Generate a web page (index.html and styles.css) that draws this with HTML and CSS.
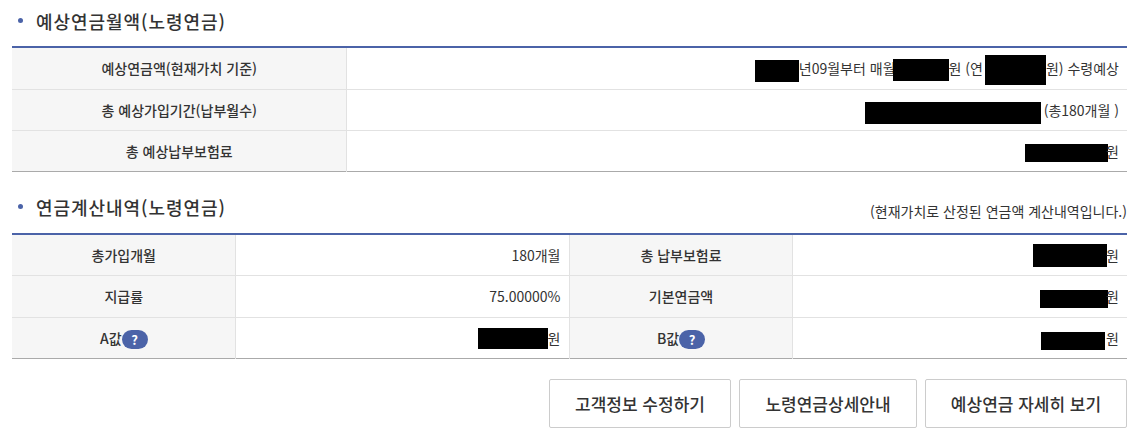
FILE: index.html
```html
<!DOCTYPE html>
<html lang="ko">

<head>
    <meta charset="UTF-8">
    <title>예상연금월액</title>
    <link rel="stylesheet" href="styles.css">
</head>

<body>

    <!-- 예상연금월액 -->
    <div class="section-head">
        <h2 class="section-title">예상연금월액(노령연금)</h2>
    </div>
    <table class="info-table first-table">
        <colgroup>
            <col class="col-wide">
            <col>
        </colgroup>
        <tr class="row-tall">
            <th>예상연금액(현재가치 기준)</th>
            <td><span class="redact r-year"></span>년09월부터 매월<span class="redact r-month"></span>원 (연<span class="redact r-annual"></span>원) 수령예상</td>
        </tr>
        <tr>
            <th>총 예상가입기간(납부월수)</th>
            <td><span class="redact r-period"></span>(총180개월 )</td>
        </tr>
        <tr>
            <th>총 예상납부보험료</th>
            <td><span class="redact r-premium"></span>원</td>
        </tr>
    </table>

    <!-- 연금계산내역 -->
    <div class="section-head second-head">
        <h2 class="section-title">연금계산내역(노령연금)</h2>
        <p class="section-note">(현재가치로 산정된 연금액 계산내역입니다.)</p>
    </div>
    <table class="info-table">
        <colgroup>
            <col class="col-a">
            <col class="col-b">
            <col class="col-c">
            <col>
        </colgroup>
        <tr class="row-tall">
            <th>총가입개월</th>
            <td>180개월</td>
            <th>총 납부보험료</th>
            <td><span class="redact r-total"></span>원</td>
        </tr>
        <tr class="row-tall row-up">
            <th>지급률</th>
            <td>75.00000%</td>
            <th>기본연금액</th>
            <td><span class="redact r-basic"></span>원</td>
        </tr>
        <tr>
            <th>A값<span class="help">?</span></th>
            <td><span class="redact r-a"></span>원</td>
            <th>B값<span class="help">?</span></th>
            <td><span class="redact r-b"></span>원</td>
        </tr>
    </table>

    <div class="btn-row">
        <button class="btn btn-edit">고객정보 수정하기</button>
        <button class="btn btn-guide">노령연금상세안내</button>
        <button class="btn btn-detail">예상연금 자세히 보기</button>
    </div>

</body>

</html>
```

FILE: styles.css
```css
:root {
    --point: #4b63a8;
    --text: #333;
    --line: #e2e2e2;
}

* {
    box-sizing: border-box;
}

body {
    margin: 0;
    padding: 0 11px 0 12px;
    width: 1138px;
    height: 438px;
    overflow: hidden;
    background: #fff;
    color: var(--text);
    font-family: "Noto Sans CJK KR", "Noto Sans", sans-serif;
    font-size: 14px;
}

.section-head {
    display: flex;
    justify-content: space-between;
    align-items: flex-end;
    height: 46px;
    padding-bottom: 12px;
}

.second-head {
    height: 61px;
    padding-bottom: 13px;
}

.section-title {
    position: relative;
    margin: 0;
    padding-left: 24px;
    font-size: 18px;
    line-height: 26px;
    font-weight: 500;
    letter-spacing: 0.95px;
}

.section-title::before {
    content: "";
    position: absolute;
    left: 6px;
    top: 10px;
    width: 5px;
    height: 5px;
    border-radius: 50%;
    background: var(--point);
}

.section-note {
    margin: 0;
    font-size: 14px;
    line-height: 20px;
    margin-bottom: -1px;
}

.info-table {
    width: 100%;
    table-layout: fixed;
    border-collapse: collapse;
    border-top: 2px solid var(--point);
    border-bottom: 1px solid #aaa;
}

.col-wide {
    width: 334px;
}

.col-a {
    width: 223px;
}

.col-b {
    width: 334px;
}

.col-c {
    width: 223px;
}

.info-table th,
.info-table td {
    height: 41px;
    padding: 0 8px 0 9px;
    border-bottom: 1px solid var(--line);
    line-height: 20px;
}

.info-table .row-tall th,
.info-table .row-tall td {
    height: 42px;
}

.info-table .row-up th,
.info-table .row-up td {
    padding-bottom: 2px;
}

.info-table tr:last-child th,
.info-table tr:last-child td {
    border-bottom: none;
}

.info-table th {
    background: #f6f6f6;
    border-left: 1px solid var(--line);
    border-right: 1px solid var(--line);
    font-weight: 500;
    text-align: center;
}

.info-table th:first-child {
    border-left: none;
}

.info-table td {
    text-align: right;
}

.help {
    display: inline-block;
    width: 26px;
    height: 19px;
    border-radius: 10px;
    background: var(--point);
    color: #fff;
    font-size: 13px;
    font-weight: 700;
    line-height: 19px;
    vertical-align: -1px;
}

/* blacked out values */
.redact {
    display: inline-block;
    background: #000;
    margin-top: -14px;
    margin-bottom: -14px;
}

.r-year {
    width: 44px;
    height: 22px;
    vertical-align: 6px;
}

.r-month {
    width: 56px;
    height: 22px;
    margin-left: -3px;
    vertical-align: 7px;
}

.r-annual {
    width: 61px;
    height: 30px;
    margin-left: 2px;
    vertical-align: 3px;
}

.r-period {
    width: 176px;
    height: 22px;
    margin-right: 3px;
    vertical-align: 6px;
}

.r-premium {
    width: 83px;
    height: 18px;
    margin-right: -2px;
    vertical-align: 9px;
}

.r-total {
    width: 74px;
    height: 23px;
    margin-right: -1px;
    vertical-align: 8px;
}

.r-basic {
    width: 68px;
    height: 18px;
    margin-right: -2px;
    vertical-align: 8px;
}

.r-a {
    width: 70px;
    height: 21px;
    vertical-align: 9px;
}

.r-b {
    width: 64px;
    height: 18px;
    margin-right: 1px;
    vertical-align: 8px;
}

.btn-row {
    display: flex;
    justify-content: flex-end;
    gap: 8px;
    margin-top: 20px;
}

.btn {
    height: 49px;
    background: #fff;
    border: 1px solid #ccc;
    border-radius: 2px;
    color: var(--text);
    font-family: inherit;
    font-size: 17px;
    font-weight: 500;
    cursor: pointer;
}

.btn-edit {
    width: 182px;
}

.btn-guide {
    width: 178px;
}

.btn-detail {
    width: 202px;
}
```
